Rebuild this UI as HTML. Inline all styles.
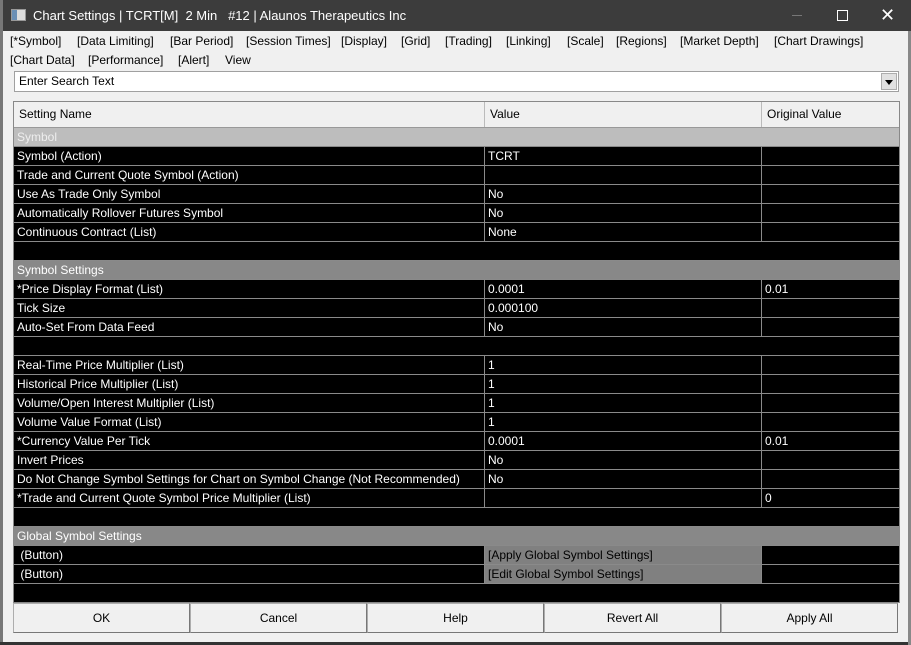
<!DOCTYPE html>
<html><head><meta charset="utf-8">
<style>
*{margin:0;padding:0;box-sizing:border-box}
body{width:911px;height:645px;overflow:hidden;background:#f0f0f0;font-family:"Liberation Sans",sans-serif;font-size:12px;color:#000;position:relative}
.a{position:absolute}
#title{left:0;top:0;width:911px;height:31px;background:#3c3c3c;color:#fff;font-size:13px}
.m{position:absolute;white-space:nowrap;line-height:15px}
#search{left:14px;top:71px;width:885px;height:21px;background:#fff;border:1px solid #a0a0a0;padding:2px 4px;line-height:15px}
#dd{right:1px;top:1px;width:16px;height:17px;background:#e1e1e1;border:1px solid #adadad}
#grid{left:13px;top:101px;width:887px;height:502px;background:#000;border:1px solid #888}
.hdr{top:0;height:26px;background:#f0f0f0;border-bottom:1px solid #999;line-height:25px}
.hdr div{position:absolute;top:0;height:25px;padding-left:5px;border-right:1px solid #bbb}
.r{left:0;width:885px;height:19px;border-bottom:1px solid #8a8a8a;color:#fff;line-height:18px}
.r div{position:absolute;top:0;height:18px;padding-left:3px;white-space:nowrap}
.c1{left:0;width:470px}
.c2{left:470px;width:277px;border-left:1px solid #8a8a8a}
.c3{left:747px;width:138px;border-left:1px solid #8a8a8a}
.sec{background:#888;color:#fff}
.sec0{background:#bdbdbd;color:#eee}
.btn{top:603px;height:30px;background:#f0f0f0;border:1px solid #adadad;border-right-color:#777;border-bottom-color:#777;text-align:center;line-height:28px}
</style></head><body>
<div id="title" class="a">
 <div class="a" style="left:11px;top:9px;width:15px;height:12px;background:#ddd;border:1px solid #999"><div class="a" style="left:0;top:0;width:5px;height:10px;background:#6a8fb5"></div></div>
 <div class="a" style="left:33px;top:8px">Chart Settings | TCRT[M]&nbsp; 2 Min &nbsp; #12 | Alaunos Therapeutics Inc</div>
 <div class="a" style="left:792px;top:15px;width:10px;height:1px;background:#777"></div>
 <div class="a" style="left:837px;top:10px;width:11px;height:11px;border:1px solid #fff"></div>
 <div class="a" style="left:880px;top:5px;font-size:18px;line-height:20px">✕</div>
</div>
<div class="m" style="left:10px;top:34px">[*Symbol]</div>
<div class="m" style="left:77px;top:34px">[Data Limiting]</div>
<div class="m" style="left:170px;top:34px">[Bar Period]</div>
<div class="m" style="left:246px;top:34px">[Session Times]</div>
<div class="m" style="left:341px;top:34px">[Display]</div>
<div class="m" style="left:401px;top:34px">[Grid]</div>
<div class="m" style="left:445px;top:34px">[Trading]</div>
<div class="m" style="left:506px;top:34px">[Linking]</div>
<div class="m" style="left:567px;top:34px">[Scale]</div>
<div class="m" style="left:616px;top:34px">[Regions]</div>
<div class="m" style="left:680px;top:34px">[Market Depth]</div>
<div class="m" style="left:774px;top:34px">[Chart Drawings]</div>
<div class="m" style="left:10px;top:53px">[Chart Data]</div>
<div class="m" style="left:88px;top:53px">[Performance]</div>
<div class="m" style="left:178px;top:53px">[Alert]</div>
<div class="m" style="left:225px;top:53px">View</div>
<div id="search" class="a">Enter Search Text<div id="dd" class="a"><div class="a" style="left:3px;top:6px;width:0;height:0;border-left:4px solid transparent;border-right:4px solid transparent;border-top:5px solid #000"></div></div></div>
<div id="grid" class="a">
 <div class="a hdr" style="left:0;width:885px">
  <div style="left:0;width:471px">Setting Name</div>
  <div style="left:471px;width:277px">Value</div>
  <div style="left:748px;width:137px;border-right:none">Original Value</div>
 </div>
 <div class="a r sec0" style="top:26px"><div class="c1">Symbol</div></div>
 <div class="a r" style="top:45px"><div class="c1">Symbol (Action)</div><div class="c2">TCRT</div><div class="c3"></div></div>
 <div class="a r" style="top:64px"><div class="c1">Trade and Current Quote Symbol (Action)</div><div class="c2"></div><div class="c3"></div></div>
 <div class="a r" style="top:83px"><div class="c1">Use As Trade Only Symbol</div><div class="c2">No</div><div class="c3"></div></div>
 <div class="a r" style="top:102px"><div class="c1">Automatically Rollover Futures Symbol</div><div class="c2">No</div><div class="c3"></div></div>
 <div class="a r" style="top:121px"><div class="c1">Continuous Contract (List)</div><div class="c2">None</div><div class="c3"></div></div>
 <div class="a r" style="top:140px"></div>
 <div class="a r sec" style="top:159px"><div class="c1">Symbol Settings</div></div>
 <div class="a r" style="top:178px"><div class="c1">*Price Display Format (List)</div><div class="c2">0.0001</div><div class="c3">0.01</div></div>
 <div class="a r" style="top:197px"><div class="c1">Tick Size</div><div class="c2">0.000100</div><div class="c3"></div></div>
 <div class="a r" style="top:216px"><div class="c1">Auto-Set From Data Feed</div><div class="c2">No</div><div class="c3"></div></div>
 <div class="a r" style="top:235px"></div>
 <div class="a r" style="top:254px"><div class="c1">Real-Time Price Multiplier (List)</div><div class="c2">1</div><div class="c3"></div></div>
 <div class="a r" style="top:273px"><div class="c1">Historical Price Multiplier (List)</div><div class="c2">1</div><div class="c3"></div></div>
 <div class="a r" style="top:292px"><div class="c1">Volume/Open Interest Multiplier (List)</div><div class="c2">1</div><div class="c3"></div></div>
 <div class="a r" style="top:311px"><div class="c1">Volume Value Format (List)</div><div class="c2">1</div><div class="c3"></div></div>
 <div class="a r" style="top:330px"><div class="c1">*Currency Value Per Tick</div><div class="c2">0.0001</div><div class="c3">0.01</div></div>
 <div class="a r" style="top:349px"><div class="c1">Invert Prices</div><div class="c2">No</div><div class="c3"></div></div>
 <div class="a r" style="top:368px"><div class="c1">Do Not Change Symbol Settings for Chart on Symbol Change (Not Recommended)</div><div class="c2">No</div><div class="c3"></div></div>
 <div class="a r" style="top:387px"><div class="c1">*Trade and Current Quote Symbol Price Multiplier (List)</div><div class="c2"></div><div class="c3">0</div></div>
 <div class="a r" style="top:406px"></div>
 <div class="a r sec" style="top:425px"><div class="c1">Global Symbol Settings</div></div>
 <div class="a r" style="top:444px"><div class="c1">&nbsp;(Button)</div><div class="c2" style="background:#808080;color:#000">[Apply Global Symbol Settings]</div><div class="c3"></div></div>
 <div class="a r" style="top:463px"><div class="c1">&nbsp;(Button)</div><div class="c2" style="background:#808080;color:#000">[Edit Global Symbol Settings]</div><div class="c3"></div></div>
</div>
<div class="a btn" style="left:13px;width:177px">OK</div>
<div class="a btn" style="left:190px;width:177px">Cancel</div>
<div class="a btn" style="left:367px;width:177px">Help</div>
<div class="a btn" style="left:544px;width:177px">Revert All</div>
<div class="a btn" style="left:721px;width:177px">Apply All</div>
<div class="a" style="left:0;top:0;width:3px;height:645px;background:#777"></div>
<div class="a" style="left:0;top:642px;width:911px;height:3px;background:#333"></div>
<div class="a" style="left:908px;top:31px;width:3px;height:614px;background:#888"></div>
</body></html>
